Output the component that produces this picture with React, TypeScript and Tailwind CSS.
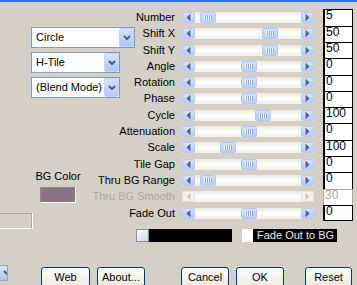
import clsx from "clsx";

type Row = {
  label: string;
  value: string;
  thumb?: number;
  disabled?: boolean;
};

const rows: Row[] = [
  { label: "Number", value: "5", thumb: 5 },
  { label: "Shift X", value: "50", thumb: 67 },
  { label: "Shift Y", value: "50", thumb: 67 },
  { label: "Angle", value: "0", thumb: 46 },
  { label: "Rotation", value: "0", thumb: 46 },
  { label: "Phase", value: "0", thumb: 46 },
  { label: "Cycle", value: "100", thumb: 60 },
  { label: "Attenuation", value: "0", thumb: 46 },
  { label: "Scale", value: "100", thumb: 25 },
  { label: "Tile Gap", value: "0", thumb: 46 },
  { label: "Thru BG Range", value: "0", thumb: 5 },
  { label: "Thru BG Smooth", value: "30", disabled: true },
  { label: "Fade Out", value: "0", thumb: 46 },
];

function Chevron() {
  return (
    <svg width="8" height="6" viewBox="0 0 8 6">
      <polyline points="1,1 4,4 7,1" fill="none" stroke="#4d6185" strokeWidth="2" />
    </svg>
  );
}

function Combo({ text, width }: { text: string; width: string }) {
  return (
    <div className={clsx("flex h-[21px] items-stretch border border-[#7f9db9] bg-white", width)}>
      <div className="flex flex-1 items-center pl-[4px] text-[11px]">{text}</div>
      <div className="flex w-[15px] items-center justify-center rounded-[2px] border border-[#c3d3f8] bg-linear-to-b from-[#d4e1fd] to-[#b3c8f7]">
        <Chevron />
      </div>
    </div>
  );
}

function ScrollArrow({ dir, disabled }: { dir: "left" | "right"; disabled?: boolean }) {
  return (
    <div
      className={clsx(
        "flex h-full w-[13px] items-center justify-center rounded-[2px] border",
        disabled ? "border-[#e6e4da] bg-[#f2f1ec]" : "border-[#b9cbf5] bg-linear-to-b from-[#d5e1fd] to-[#b7caf7]"
      )}
    >
      <svg width="5" height="7" viewBox="0 0 5 7">
        <path
          d={dir === "left" ? "M4 0.5 L1 3.5 L4 6.5 Z" : "M1 0.5 L4 3.5 L1 6.5 Z"}
          fill={disabled ? "#cac8bb" : "#4d6185"}
          stroke={disabled ? "#cac8bb" : "#4d6185"}
          strokeWidth="0.8"
        />
      </svg>
    </div>
  );
}

function Scroll({ thumb, disabled }: { thumb?: number; disabled?: boolean }) {
  return (
    <div className="ml-[7px] flex h-[11px] w-[132px] items-stretch bg-linear-to-b from-[#ebeae2] via-[#fdfdfb] to-[#f0efe8]">
      <ScrollArrow dir="left" disabled={disabled} />
      <div className="flex flex-1 items-stretch">
        {thumb !== undefined && (
          <div
            className="flex w-[16px] items-center justify-center rounded-[2px] border border-[#b4c7f5] bg-linear-to-b from-[#d2dffd] to-[#bacdf8]"
            style={{ marginLeft: thumb }}
          >
            <div className="flex h-[5px]">
              <div className="w-px bg-[#eef3fe]" />
              <div className="w-px bg-[#8fa8e2]" />
              <div className="w-px bg-[#eef3fe]" />
              <div className="w-px bg-[#8fa8e2]" />
              <div className="w-px bg-[#eef3fe]" />
              <div className="w-px bg-[#8fa8e2]" />
              <div className="w-px bg-[#eef3fe]" />
              <div className="w-px bg-[#8fa8e2]" />
            </div>
          </div>
        )}
      </div>
      <ScrollArrow dir="right" disabled={disabled} />
    </div>
  );
}

function Button({ label, className }: { label: string; className: string }) {
  return (
    <div
      className={clsx(
        "mt-[2px] flex h-[20px] items-center justify-center rounded-[3px] border border-[#003c74] bg-linear-to-b from-white to-[#ece9de] text-[11px]",
        className
      )}
    >
      {label}
    </div>
  );
}

export default function App() {
  return (
    <div className="relative h-[285px] w-[357px] overflow-hidden bg-[#d4d0c8] font-['Liberation_Sans',Arial,sans-serif] text-[11px] text-black">
      <div className="h-[2px] bg-[#2f6fef]" />

      <div className="grid">
        {/* left column: combos, colour swatch */}
        <div className="col-start-1 row-start-1 flex flex-col">
          <div className="mt-[25px] ml-[31px] flex flex-col gap-[4px]">
            <Combo text="Circle" width="w-[104px]" />
            <Combo text="H-Tile" width="w-[89px]" />
            <Combo text="(Blend Mode)" width="w-[89px]" />
          </div>
          <div className="mt-[72px] ml-[40px] flex w-[36px] flex-col items-center">
            <div className="whitespace-nowrap leading-[13px]">BG Color</div>
            <div className="mt-[4px] h-[16px] w-[36px] border border-t-[#8e8a80] border-l-[#8e8a80] border-r-white border-b-white bg-[#8b7384]" />
          </div>
          <div className="mt-[10px] ml-[-2px] h-[16px] w-[34px] border border-t-[#aca899] border-l-[#aca899] border-r-[#aca899] border-b-white shadow-[1px_0_0_white]" />
        </div>

        {/* right column: slider rows */}
        <div className="col-start-1 row-start-1 flex flex-col pt-[7.2px]">
          {rows.map((r, i) => (
            <div key={r.label} className="flex h-[16.33px] items-center">
              <div className={clsx("w-[175px] whitespace-nowrap text-right leading-none", r.disabled && "text-[#aca899]")}>
                {r.label}
              </div>
              <Scroll thumb={r.thumb} disabled={r.disabled} />
              <div
                className={clsx(
                  "ml-[9px] h-full w-[30px] border-t border-r bg-white pl-px text-[12px] leading-[10px]",
                  r.disabled ? "border-l border-[#aca899] text-[#aca899]" : "border-l-2 border-black",
                  i === rows.length - 1 && "border-b"
                )}
              >
                {r.value}
              </div>
            </div>
          ))}

          <div className="mt-[7.5px] ml-[136px] flex h-[13px] items-stretch">
            <div className="flex w-[96px] bg-black">
              <div className="w-[13px] border border-[#8a8f98] bg-linear-to-br from-white to-[#c9d3e0]" />
            </div>
            <div className="ml-[10px] w-[11px] bg-white" />
            <div className="flex w-[84px] items-center bg-black pl-[4px] leading-none text-[#ecebe6]">Fade Out to BG</div>
          </div>
        </div>
      </div>

      <div className="mt-[23px] flex items-start">
        <div className="flex h-[16px] w-[8px] items-center justify-end overflow-hidden border border-l-0 border-[#9fa7b4] bg-linear-to-b from-[#d4e1fd] to-[#b3c8f7]">
          <div className="-mr-[4px]">
            <Chevron />
          </div>
        </div>
        <Button label="Web" className="ml-[33px] w-[49px]" />
        <Button label="About..." className="ml-[7px] w-[48px]" />
        <Button label="Cancel" className="ml-[36px] w-[48px]" />
        <Button label="OK" className="ml-[7px] w-[48px]" />
        <Button label="Reset" className="ml-[21px] w-[47px]" />
      </div>
    </div>
  );
}
